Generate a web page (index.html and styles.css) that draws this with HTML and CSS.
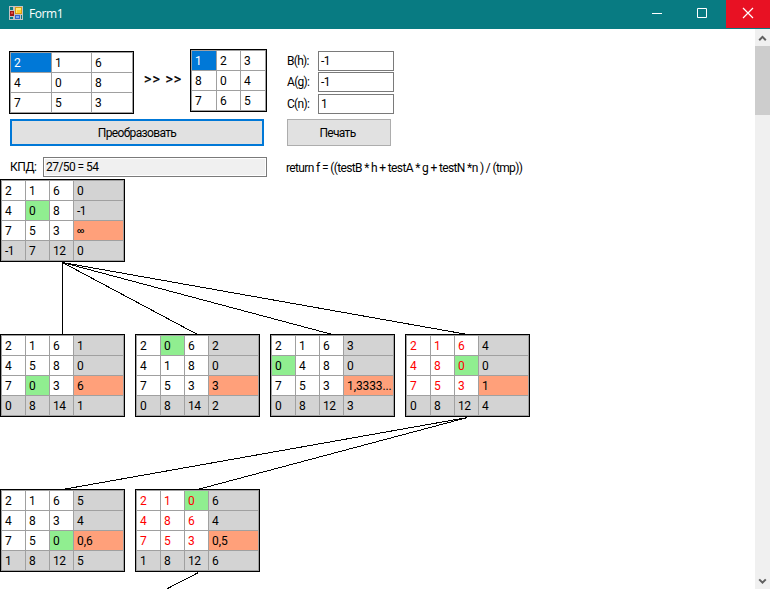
FILE: index.html
```html
<!DOCTYPE html>
<html lang="ru">
<head>
<meta charset="utf-8">
<title>Form1</title>
<link rel="stylesheet" href="styles.css">
</head>
<body>
<header class="titlebar">
  <svg class="app-icon" width="14" height="14" viewBox="0 0 14 14" shape-rendering="crispEdges">
    <path fill="#c4c4c4" d="M0 0h14v14H0z"/>
    <path fill="#087b82" d="M1 1h3v3H1zM1 11h3v2H1zM12 9h1v4h-1z"/>
    <path fill="#a01818" d="M1 5h4v5H1z"/><path fill="#e04a3c" d="M2 6h2v2H2z"/>
    <path fill="#d99a12" d="M6 1h7v7H6z"/><path fill="#ffe878" d="M7 2h5v5H7z"/><path fill="#ffd030" d="M8 4h4v3H8z"/>
    <path fill="#3565cc" d="M6 9h5v4H6z"/><path fill="#7fa8f4" d="M7 10h3v2H7z"/>
  </svg>
  <h1 class="caption">Form1</h1>
  <div class="win-btn"><svg width="12" height="12" viewBox="0 0 12 12" shape-rendering="crispEdges"><path fill="#fff" d="M1 6h10v1H1z"/></svg></div>
  <div class="win-btn"><svg width="12" height="12" viewBox="0 0 12 12"><path fill="none" stroke="#fff" d="M1.5 1.5h9v9h-9z"/></svg></div>
  <div class="win-btn close"><svg width="12" height="12" viewBox="0 0 12 12"><path fill="none" stroke="#fff" stroke-width="1.2" d="M1 1l10 10M11 1L1 11"/></svg></div>
</header>
<div class="client">
  <main class="content">
    <section class="controls">
      <div class="left">
        <div class="boards">
          <div class="grid start"><span class="sel">2</span><span>1</span><span>6</span><span>4</span><span>0</span><span>8</span><span>7</span><span>5</span><span>3</span></div>
          <div class="arrows">&gt;&gt; &gt;&gt;</div>
          <div class="grid goal"><span class="sel">1</span><span>2</span><span>3</span><span>8</span><span>0</span><span>4</span><span>7</span><span>6</span><span>5</span></div>
        </div>
        <button class="btn default">Преобразовать</button>
        <div class="kpd"><label>КПД:</label><div class="field readonly">27/50 = 54</div></div>
      </div>
      <div class="right">
        <div class="params">
          <label>B(h):</label><div class="field">-1</div>
          <label>A(g):</label><div class="field">-1</div>
          <label>C(n):</label><div class="field">1</div>
        </div>
        <button class="btn print">Печать</button>
        <div class="formula">return f = ((testB * h + testA * g + testN *n ) / (tmp))</div>
      </div>
    </section>
    <section class="tree">
      <svg class="edges" width="755" height="410" viewBox="0 179 755 410" shape-rendering="crispEdges">
        <path d="M62.5 262V334M62.5 262.5L197.5 334.5M62.5 262.5L332.5 334.5M62.5 262.5L467.5 334.5M467.5 417.5L62.5 489.5M467.5 417.5L197.5 489.5M198.5 572.5L167.5 588.5"/>
      </svg>
      <div class="grid node c0 r0"><span>2</span><span>1</span><span>6</span><span class="g">0</span><span>4</span><span class="z">0</span><span>8</span><span class="g">-1</span><span>7</span><span>5</span><span>3</span><span class="f inf">∞</span><span class="g">-1</span><span class="g">7</span><span class="g">12</span><span class="g">0</span></div>
      <div class="grid node c0 r1"><span>2</span><span>1</span><span>6</span><span class="g">1</span><span>4</span><span>5</span><span>8</span><span class="g">0</span><span>7</span><span class="z">0</span><span>3</span><span class="f">6</span><span class="g">0</span><span class="g">8</span><span class="g">14</span><span class="g">1</span></div>
      <div class="grid node c1 r1"><span>2</span><span class="z">0</span><span>6</span><span class="g">2</span><span>4</span><span>1</span><span>8</span><span class="g">0</span><span>7</span><span>5</span><span>3</span><span class="f">3</span><span class="g">0</span><span class="g">8</span><span class="g">14</span><span class="g">2</span></div>
      <div class="grid node c2 r1"><span>2</span><span>1</span><span>6</span><span class="g">3</span><span class="z">0</span><span>4</span><span>8</span><span class="g">0</span><span>7</span><span>5</span><span>3</span><span class="f">1,3333...</span><span class="g">0</span><span class="g">8</span><span class="g">12</span><span class="g">3</span></div>
      <div class="grid node path c3 r1"><span>2</span><span>1</span><span>6</span><span class="g">4</span><span>4</span><span>8</span><span class="z">0</span><span class="g">0</span><span>7</span><span>5</span><span>3</span><span class="f">1</span><span class="g">0</span><span class="g">8</span><span class="g">12</span><span class="g">4</span></div>
      <div class="grid node c0 r2"><span>2</span><span>1</span><span>6</span><span class="g">5</span><span>4</span><span>8</span><span>3</span><span class="g">4</span><span>7</span><span>5</span><span class="z">0</span><span class="f">0,6</span><span class="g">1</span><span class="g">8</span><span class="g">12</span><span class="g">5</span></div>
      <div class="grid node path c1 r2"><span>2</span><span>1</span><span class="z">0</span><span class="g">6</span><span>4</span><span>8</span><span>6</span><span class="g">4</span><span>7</span><span>5</span><span>3</span><span class="f">0,5</span><span class="g">1</span><span class="g">8</span><span class="g">12</span><span class="g">6</span></div>
    </section>
  </main>
  <aside class="scrollbar">
    <svg class="arrow" width="15" height="17" viewBox="0 0 15 17"><path d="M4.2 11.2L7.5 7.9l3.3 3.3"/></svg>
    <div class="thumb"></div>
    <svg class="arrow down" width="15" height="17" viewBox="0 0 15 17"><path d="M4.2 7.4l3.3 3.3 3.3-3.3"/></svg>
  </aside>
</div>
</body>
</html>
```
FILE: styles.css
```css
* { box-sizing: border-box; }
body {
  margin: 0;
  width: 770px;
  height: 589px;
  overflow: hidden;
  display: flex;
  flex-direction: column;
  background: #fff;
  color: #000;
  font: 12px/18px Roboto, sans-serif;
  letter-spacing: -0.5px;
  white-space: nowrap;
}
.titlebar {
  flex: none;
  height: 29px;
  display: flex;
  align-items: flex-start;
  background: #087b82;
}
.app-icon { margin: 6px 6px 0 9px; }
.caption {
  flex: 1;
  margin: 0;
  color: #fff;
  font: 12px/27px "Open Sans", sans-serif;
  letter-spacing: -0.4px;
}
.win-btn {
  width: 45px;
  height: 28px;
  display: flex;
  justify-content: center;
  padding: 7px 3px 0 0;
}
.win-btn.close { width: 44px; padding-right: 0; background: #e81123; }
.client { flex: 1; min-height: 0; display: flex; }
.content { flex: 1; min-width: 0; display: flex; flex-direction: column; }
.controls { flex: none; height: 150px; display: flex; }
.left { width: 267px; padding: 20px 0 0 9px; }
.boards { display: flex; height: 65px; margin-bottom: 5px; }
.grid {
  display: grid;
  gap: 1px;
  padding: 1px;
  border: 1px solid #000;
  background: #a0a0a0;
  grid-auto-rows: 19px;
}
.grid span { background: #fff; padding-left: 3px; line-height: 21px; height: 19px; overflow: hidden; }
.start { width: 125px; height: 63px; margin-top: 2px; grid-template-columns: 40px 39px 40px; }
.goal { width: 77px; height: 63px; grid-template-columns: 24px 23px 24px; }
.arrows {
  width: 56px;
  padding: 21px 0 0 10px;
  font-size: 14px;
  letter-spacing: 1.1px;
  -webkit-text-stroke: 0.3px #000;
}
.grid .sel { background: #0078d7; color: #fff; }
.btn {
  display: block;
  height: 27px;
  padding: 0;
  border: 1px solid #adadad;
  background: #e1e1e1;
  color: #000;
  font: inherit;
}
.default { width: 254px; margin-left: 1px; border: 2px solid #0078d7; letter-spacing: -0.65px; }
.print { width: 104px; margin-left: 20px; padding-right: 3px; letter-spacing: -0.7px; }
.kpd { display: flex; margin-top: 11px; }
.kpd label { width: 34px; padding-left: 1px; line-height: 20px; letter-spacing: -0.4px; }
.field { height: 20px; padding-left: 2px; border: 1px solid #7a7a7a; background: #fff; line-height: 19px; }
.readonly { flex: 1; background: #f0f0f0; box-shadow: inset 0 0 0 1px #fff; letter-spacing: -0.55px; }
.right { padding-top: 22px; }
.params {
  display: grid;
  grid-template-columns: 31px 76px;
  grid-template-rows: 21px 22px 25px;
  padding-left: 20px;
}
.params label { letter-spacing: -0.7px; line-height: 20px; }
.formula { margin-top: 12px; padding-left: 19px; line-height: 20px; letter-spacing: -0.64px; }
.tree { position: relative; flex: 1; }
.edges { position: absolute; left: 0; top: 0; fill: none; stroke: #000; }
.node { position: absolute; width: 125px; height: 83px; grid-template-columns: 23px 23px 23px 49px; }
.c0 { left: 0; }
.c1 { left: 135px; }
.c2 { left: 270px; }
.c3 { left: 405px; }
.r0 { top: 0; }
.r1 { top: 155px; }
.r2 { top: 310px; }
.path { color: #f00; }
.grid .g { background: #d3d3d3; color: #000; }
.grid .f { background: #ffa07a; color: #000; letter-spacing: -0.1px; }
.grid .z { background: #90ee90; }
.grid .inf { font-size: 7px; font-weight: bold; }
.scrollbar { width: 15px; background: #f0f0f0; display: flex; flex-direction: column; }
.arrow { fill: none; stroke: #606060; stroke-width: 2; }
.thumb { height: 69px; background: #cdcdcd; }
.down { margin-top: auto; }
```
